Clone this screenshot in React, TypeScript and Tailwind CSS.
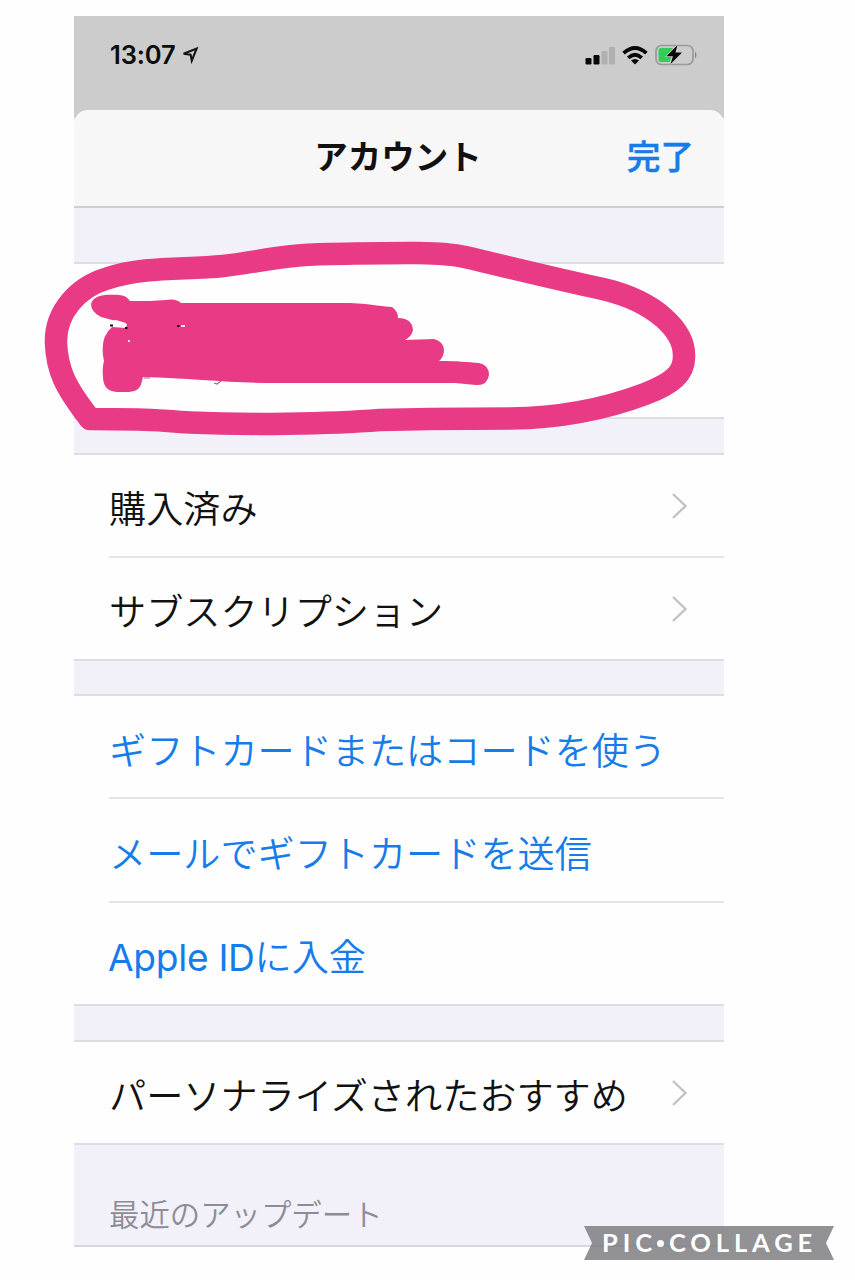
import type { ReactNode } from "react";

function LocationArrow() {
  return (
    <svg className="h-[18px] w-[18px]" viewBox="0 0 18 18" fill="none" stroke="#111" strokeWidth="2.1" strokeLinejoin="miter">
      <path d="M2.6 7.8 L15.6 2.6 L10.8 14.6 L9.6 8.6 Z" />
    </svg>
  );
}

function SignalBars() {
  return (
    <svg className="h-[19px] w-[30px]" viewBox="0 0 30 19">
      <rect x="0.5" y="12" width="6" height="6.5" rx="1.3" fill="#080808" />
      <rect x="8.5" y="9" width="6" height="9.5" rx="1.3" fill="#080808" />
      <rect x="16.5" y="5" width="6" height="13.5" rx="1.3" fill="#b0b0b0" />
      <rect x="24" y="1" width="6" height="17.5" rx="1.3" fill="#b0b0b0" />
    </svg>
  );
}

function WifiIcon() {
  return (
    <svg className="h-[19px] w-[26px]" viewBox="0 0 26 19" fill="none" stroke="#080808" strokeWidth="3.7">
      <path d="M1.6 7.2 Q13 -3.2 24.4 7.2" />
      <path d="M6.2 11.8 Q13 5.6 19.8 11.8" />
      <path d="M9 14.6 Q13 11.4 17 14.6 L13 18.6 Z" fill="#080808" stroke="none" />
    </svg>
  );
}

function BatteryIcon() {
  return (
    <svg className="h-[22px] w-[43px]" viewBox="0 0 43 22">
      <rect x="1" y="1.5" width="37" height="19" rx="5.5" fill="none" stroke="#999999" strokeWidth="1.7" />
      <path d="M40 7.5 Q43 11 40 14.5 Z" fill="#858585" />
      <path d="M6 4 H18 L13 12 H17 L14.5 18 H6 Q3.5 18 3.5 15.5 V6.5 Q3.5 4 6 4 Z" fill="#31cd57" />
      <path d="M22.5 1 L11.5 12.3 H18 L15.5 20 L27 8.5 H20.5 Z" fill="#080808" stroke="#cbcbcb" strokeWidth="1.4" paintOrder="stroke" />
    </svg>
  );
}

function Chevron() {
  return (
    <svg className="mr-[36px] h-[26px] w-[16px]" viewBox="0 0 16 26" fill="none" stroke="#c2c2c4" strokeWidth="2.4">
      <path d="M1 1 L13.5 13 L1 25" />
    </svg>
  );
}

function Row({ children, link = false, chevron = false, divider = false }: { children: ReactNode; link?: boolean; chevron?: boolean; divider?: boolean }) {
  return (
    <div className={`ml-[35px] flex flex-1 items-center justify-between whitespace-nowrap text-[37.15px] font-[350] leading-none ${divider ? "border-b-2 border-[#e4e4e6]" : ""}`}>
      <span className={`pt-[9px] ${link ? "text-[#157cea]" : "text-[#111]"}`}>{children}</span>
      {chevron && <Chevron />}
    </div>
  );
}

function MarkerStrokes() {
  return (
    <svg className="pointer-events-none absolute left-0 top-[230px] h-[220px] w-[855px]" viewBox="0 230 855 220" fill="none">
      <path
        d="M90 419 C65 387 57 370 56 343 C55 312 78 287 107 278.5 C145 266 184 270 223 266 C264 261 280 255 330 254 C390 253 438 251 465 257 C516 269 560 280 603 289 C658 302 684 332 684 355 C685 374 671 384 645 394 C600 411 552 418 510 418.5 L430 419 L380 420 C330 424 245 425 190 422.5 C170 421.5 155 419.5 138 419.5 Z"
        stroke="#e83a85"
        strokeWidth="22.5"
        strokeLinejoin="round"
      />
      <path
        d="M91 304 C94 293 111 295 119 295 Q126 295 130 301 L150 301 L166 300 Q176 298 181 303 L350 303 C373 304 385 307 392 307 Q398 311 398 318 Q412 318 413 330 Q412 336 405 340 L434 339 Q444 342 444 350 Q444 357 439 361 C457 361 468 362 479 363 Q489 365 489 375 Q487 386 476 385 L455 383 L270 383 C230 383 190 378 143 377 L142 381 Q140 393 127 392 H117 Q103 391 103 377 Q102 367 104 361 Q99 338 112 327 L126 328 L127 324 L101 317 Q91 312 91 304 Z"
        fill="#e83a85"
      />
      <path d="M110 325 L114 325 L118 324 L124 326 L126 323 L116 320 L110 321 Z" fill="white" />
      <path d="M110 325.5 H113 M125 328 H127.5 M177 326 H179.5" stroke="#111" strokeWidth="2" />
      <path d="M181 326 H185 M128 341 H130" stroke="#ffe3ef" strokeWidth="1.8" />
      <path d="M214 383 L217 384 L221 381 M144 378 H150" stroke="#9c6f84" strokeWidth="1.2" />
    </svg>
  );
}

function Watermark() {
  return (
    <div className="absolute left-[584px] top-[1226px] flex h-[34px] w-[250px] items-center">
      <svg className="absolute inset-0 h-full w-full" viewBox="0 0 250 34">
        <path d="M0 0 H250 L242 17 L250 34 H0 L8 17 Z" fill="#77777b" fillOpacity="0.8" />
      </svg>
      <span className="relative flex items-center pl-[18px] font-['Lato'] text-[25.5px] font-bold leading-none tracking-[4.9px] text-white">
        <span>PIC</span>
        <span className="ml-0 mr-[5px] h-[7px] w-[7px] shrink-0 rounded-full bg-white" />
        <span>COLLAGE</span>
      </span>
    </div>
  );
}

export default function App() {
  return (
    <div className="relative h-[1280px] w-[855px] overflow-hidden bg-[#fefefe] pl-[74px] pt-4 font-['Inter','Noto_Sans_CJK_JP',sans-serif]" lang="ja">
      <main className="flex h-[1231px] w-[650px] flex-col bg-[#f2f1fa]">
        <div className="h-[102px] shrink-0 bg-[#cccccc]">
          <div className="flex h-[78px] items-center pl-[36px] pr-[26px]">
            <span className="w-[67px] whitespace-nowrap text-[25.5px] font-semibold leading-none tracking-[-0.1px] text-[#0b0b0b]">13:07</span>
            <span className="ml-[4px]"><LocationArrow /></span>
            <div className="ml-auto flex items-center gap-[7px]">
              <SignalBars />
              <WifiIcon />
              <BatteryIcon />
            </div>
          </div>
        </div>
        <header className="-mt-2 grid h-[98px] shrink-0 grid-cols-[1fr_auto_1fr] items-center rounded-t-[14px] border-b-2 border-[#cfcfd2] bg-[#f7f7f7] text-[33.5px] leading-none">
          <h1 className="relative -left-px col-start-2 font-bold text-[#111]">アカウント</h1>
          <button className="justify-self-end pr-[30px] font-medium text-[#157cea] [-webkit-text-stroke:0.5px_#157cea]">完了</button>
        </header>
        <div className="h-[54px] shrink-0" />
        <section className="h-[157px] shrink-0 border-y-2 border-[#dddde3] bg-[#fefefe]" />
        <div className="h-[34px] shrink-0" />
        <section className="flex h-[208px] shrink-0 flex-col border-y-2 border-[#dddde3] bg-[#fefefe]">
          <Row chevron divider>購入済み</Row>
          <Row chevron>サブスクリプション</Row>
        </section>
        <div className="h-[33px] shrink-0" />
        <section className="flex h-[312px] shrink-0 flex-col border-y-2 border-[#dddde3] bg-[#fefefe]">
          <Row link divider>ギフトカードまたはコードを使う</Row>
          <Row link divider>メールでギフトカードを送信</Row>
          <Row link><span className="-ml-px font-normal tracking-[-0.3px]">Apple ID</span>に入金</Row>
        </section>
        <div className="h-[34px] shrink-0" />
        <section className="flex h-[105px] shrink-0 flex-col border-y-2 border-[#dddde3] bg-[#fefefe]">
          <Row chevron>パーソナライズされたおすすめ</Row>
        </section>
        <h2 className="flex flex-1 items-end border-b-2 border-[#d8d7e0] pb-[15px] pl-[35px] text-[30.4px] font-[350] leading-none text-[#8d8c94]">最近のアップデート</h2>
      </main>
      <MarkerStrokes />
      <Watermark />
    </div>
  );
}
